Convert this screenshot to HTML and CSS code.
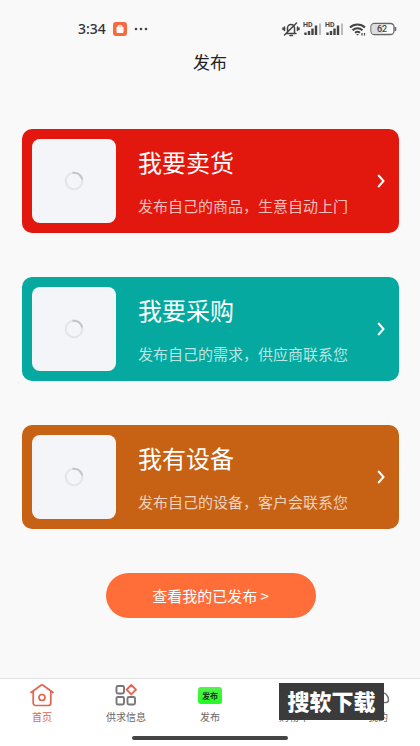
FILE: index.html
```html
<!DOCTYPE html>
<html lang="zh-CN">
<head>
<meta charset="utf-8">
<meta name="viewport" content="width=device-width, initial-scale=1">
<title>发布</title>
<link rel="stylesheet" href="styles.css">
</head>
<body>
<div class="app">
  <div class="status">
    <span class="time">3:34</span>
    <svg class="app-badge" width="14" height="14" viewBox="0 0 14 14"><rect width="14" height="14" rx="3" fill="#f9683f"/><path d="M4 5h6v5.500h-6z" fill="#fff" stroke="#fff" stroke-linejoin="round"/><path d="M5.500 5V3.500h3V5" fill="none" stroke="#fff"/></svg>
    <svg width="14" height="4" viewBox="0 0 14 4" fill="#444"><circle cx="2" cy="2" r="1.300"/><circle cx="7" cy="2" r="1.300"/><circle cx="12" cy="2" r="1.300"/></svg>
    <span class="status-icons">
      <svg width="18" height="16" viewBox="0 0 18 16" fill="none" stroke="#444" stroke-width="1.500" stroke-linecap="round"><path d="M4 12.500h10M5.500 12V7a3.500 3.500 0 0 1 7 0v5M8 14.500h2.500M2.500 14L14.500 2M2.500 6v3.500M1 7v1.500M15.500 6v3.500M17 7v1.500"/></svg>
      <svg class="signal" width="19" height="16" viewBox="0 0 19 16"><text x="0" y="6">HD</text><path d="M2.500 11.500v2.500M6 10v4M9.500 7.500v6.500M13 4.500v9.500" stroke="#444" stroke-width="2.400"/><path d="M17 2.500v11.500" stroke="#bbb" stroke-width="2"/></svg>
      <svg class="signal" width="19" height="16" viewBox="0 0 19 16"><text x="0" y="6">HD</text><path d="M2.500 11.500v2.500M6 10v4M9.500 7.500v6.500M13 4.500v9.500" stroke="#444" stroke-width="2.400"/><path d="M17 2.500v11.500" stroke="#bbb" stroke-width="2"/></svg>
      <svg class="wifi" width="18" height="16" viewBox="0 0 18 16" fill="none" stroke="#444" stroke-width="2"><path d="M1 6.500a11 11 0 0 1 15 0M3.500 9.200a7.500 7.500 0 0 1 10 0M6 11.800a4 4 0 0 1 5 0"/><path d="M7 13h3l-1.500 1.500z" fill="#444" stroke="none"/><path d="M13 12v2.500M15.500 12v2.500" stroke-width="1.200"/></svg>
      <svg class="battery" width="27" height="14" viewBox="0 0 27 14"><rect x="1" y="1.500" width="23" height="11" rx="3.500" fill="#fff" stroke="#666" stroke-width="1.300"/><path d="M4 2h9v10H4a2.500 2.500 0 0 1-2.500-2.500v-5A2.500 2.500 0 0 1 4 2z" fill="#ddd"/><path d="M25.500 5v4" stroke="#666" stroke-width="1.500"/><text x="7" y="10">62</text></svg>
    </span>
  </div>
  <header class="header"><h1>发布</h1></header>

  <main class="content">
    <a class="card card-sell" href="#sell">
      <span class="thumb"><svg width="20" height="20" viewBox="0 0 20 20" fill="none" stroke-width="2"><circle cx="10" cy="10" r="8.300" stroke="#e3e4e6"/><path d="M8.500 1.800A8.300 8.300 0 0 1 18.200 8.500" stroke="#c4c5c7"/></svg></span>
      <span class="card-text"><strong>我要卖货</strong><span class="desc">发布自己的商品，生意自动上门</span></span>
      <svg class="chevron" width="8" height="14" viewBox="0 0 8 14"><path d="M1.200 1L6.500 7L1.200 13"/></svg>
    </a>
    <a class="card card-buy" href="#buy">
      <span class="thumb"><svg width="20" height="20" viewBox="0 0 20 20" fill="none" stroke-width="2"><circle cx="10" cy="10" r="8.300" stroke="#e3e4e6"/><path d="M8.500 1.800A8.300 8.300 0 0 1 18.200 8.500" stroke="#c4c5c7"/></svg></span>
      <span class="card-text"><strong>我要采购</strong><span class="desc">发布自己的需求，供应商联系您</span></span>
      <svg class="chevron" width="8" height="14" viewBox="0 0 8 14"><path d="M1.200 1L6.500 7L1.200 13"/></svg>
    </a>
    <a class="card card-device" href="#device">
      <span class="thumb"><svg width="20" height="20" viewBox="0 0 20 20" fill="none" stroke-width="2"><circle cx="10" cy="10" r="8.300" stroke="#e3e4e6"/><path d="M8.500 1.800A8.300 8.300 0 0 1 18.200 8.500" stroke="#c4c5c7"/></svg></span>
      <span class="card-text"><strong>我有设备</strong><span class="desc">发布自己的设备，客户会联系您</span></span>
      <svg class="chevron" width="8" height="14" viewBox="0 0 8 14"><path d="M1.200 1L6.500 7L1.200 13"/></svg>
    </a>
    <button class="mine" type="button">查看我的已发布 &gt;</button>
  </main>

  <footer class="footer">
    <nav class="tabs">
      <a class="tab active" href="#home">
        <svg width="24" height="24" viewBox="0 0 24 24" fill="none" stroke="#e0644f" stroke-width="1.700" stroke-linecap="round" stroke-linejoin="round"><path d="M1 9.500L11 2.200a1.800 1.800 0 0 1 2 0L23 9.500M3.200 8.500V20a2.500 2.500 0 0 0 2.500 2.500h12.600a2.500 2.500 0 0 0 2.500-2.500V8.500"/><circle cx="12" cy="14.500" r="3"/></svg>
        <span>首页</span>
      </a>
      <a class="tab" href="#supply">
        <svg width="24" height="24" viewBox="0 0 24 24" fill="none" stroke="#777" stroke-width="1.900"><rect x="2.500" y="3" width="7.500" height="7.500" rx="1.500"/><rect x="2.500" y="14" width="7.500" height="7.500" rx="1.500"/><rect x="13.500" y="14" width="7.500" height="7.500" rx="1.500"/><path d="M17.300 2L22 6.700L17.300 11.400L12.600 6.700z" stroke="#e0644f" stroke-linejoin="round"/></svg>
        <span>供求信息</span>
      </a>
      <a class="tab" href="#publish">
        <b class="publish-icon">发布</b>
        <span>发布</span>
      </a>
      <a class="tab" href="#cart">
        <svg width="24" height="24" viewBox="0 0 24 24" fill="none" stroke="#777" stroke-width="1.500"><path d="M3 4h3l2 12h10l2-9H7"/></svg>
        <span>购物车</span>
      </a>
      <a class="tab" href="#me">
        <svg width="24" height="24" viewBox="0 0 24 24" fill="none" stroke="#777" stroke-width="1.500"><circle cx="12" cy="7" r="5"/><path d="M14 9c5 0 8.500 3.500 8.500 8a2.500 2.500 0 0 1-2.500 2.500H4a2.500 2.500 0 0 1-2.500-2.500c0-4.500 3.500-8 8.500-8"/></svg>
        <span>我的</span>
      </a>
    </nav>
    <div class="watermark">搜软下载</div>
    <div class="home-bar"></div>
  </footer>
</div>
</body>
</html>
```
FILE: styles.css
```css
* { box-sizing: border-box; }
body {
  margin: 0;
  background: #f9f9f9;
  font-family: "Noto Sans CJK SC", sans-serif;
  color: #222;
}
a { color: inherit; text-decoration: none; }
svg { display: block; flex: none; }
.app {
  display: flex;
  flex-direction: column;
  min-height: 100vh;
}
.status {
  display: flex;
  align-items: center;
  gap: 7px;
  height: 42px;
  padding: 16px 23px 0 78px;
}
.time {
  font-family: "Noto Sans", sans-serif;
  font-size: 14px;
  line-height: 20px;
  font-weight: 500;
  color: #333;
}
.status-icons {
  display: flex;
  align-items: center;
  gap: 3px;
  margin-left: auto;
}
.signal text { font: 700 7px Roboto, sans-serif; fill: #444; }
.wifi { margin-left: 2px; }
.battery text { font: 500 9px Roboto, sans-serif; fill: #444; }
.header h1 {
  margin: 0;
  font-size: 17px;
  line-height: 40px;
  font-weight: 400;
  text-align: center;
}
.content {
  flex: 1;
  display: flex;
  flex-direction: column;
  gap: 44px;
  padding: 47px 21px 44px 22px;
}
.card {
  display: flex;
  align-items: center;
  height: 104px;
  padding: 0 14px 0 10px;
  border-radius: 10px;
  color: #fff;
}
.card-sell { background: #e2180e; }
.card-buy { background: #05a99f; }
.card-device { background: #c76114; }
.thumb {
  display: grid;
  place-items: center;
  flex: none;
  width: 84px;
  height: 84px;
  border-radius: 8px;
  background: #f4f5f8;
}
.card-text {
  display: flex;
  flex-direction: column;
  gap: 14px;
  flex: 1;
  margin-left: 22px;
  white-space: nowrap;
}
.card-text strong {
  font-size: 24px;
  line-height: 36px;
  font-weight: 400;
}
.desc {
  font-size: 15px;
  line-height: 24px;
  color: rgba(255, 255, 255, .72);
}
.chevron { fill: none; stroke: #fff; stroke-width: 2; }
.mine {
  align-self: center;
  width: 210px;
  height: 45px;
  border: 0;
  border-radius: 23px;
  background: #ff6d38;
  color: #fff;
  font: inherit;
  font-size: 15px;
}
.footer {
  position: relative;
  height: 68px;
  border-top: 1px solid #e2e2e2;
  background: #fff;
}
.tabs {
  display: grid;
  grid-template-columns: repeat(5, 1fr);
}
.tab {
  display: flex;
  flex-direction: column;
  align-items: center;
  gap: 2px;
  padding-top: 4px;
  font-size: 10px;
  line-height: 16px;
  color: #666;
}
.tab.active { color: #e0644f; }
.publish-icon {
  width: 24px;
  height: 17px;
  margin: 4px 0 3px;
  border-radius: 3px;
  background: linear-gradient(#55f050, #1dff20);
  color: #143a12;
  font-size: 8px;
  line-height: 17px;
  text-align: center;
}
.watermark {
  position: absolute;
  right: 36px;
  top: 4px;
  width: 105px;
  height: 37px;
  background: #3b3b3b;
  color: #fff;
  font-size: 22px;
  line-height: 34px;
  font-weight: 900;
  text-align: center;
}
.home-bar {
  width: 156px;
  height: 4px;
  margin: 11px auto 0;
  border-radius: 2px;
  background: #444;
}
```
